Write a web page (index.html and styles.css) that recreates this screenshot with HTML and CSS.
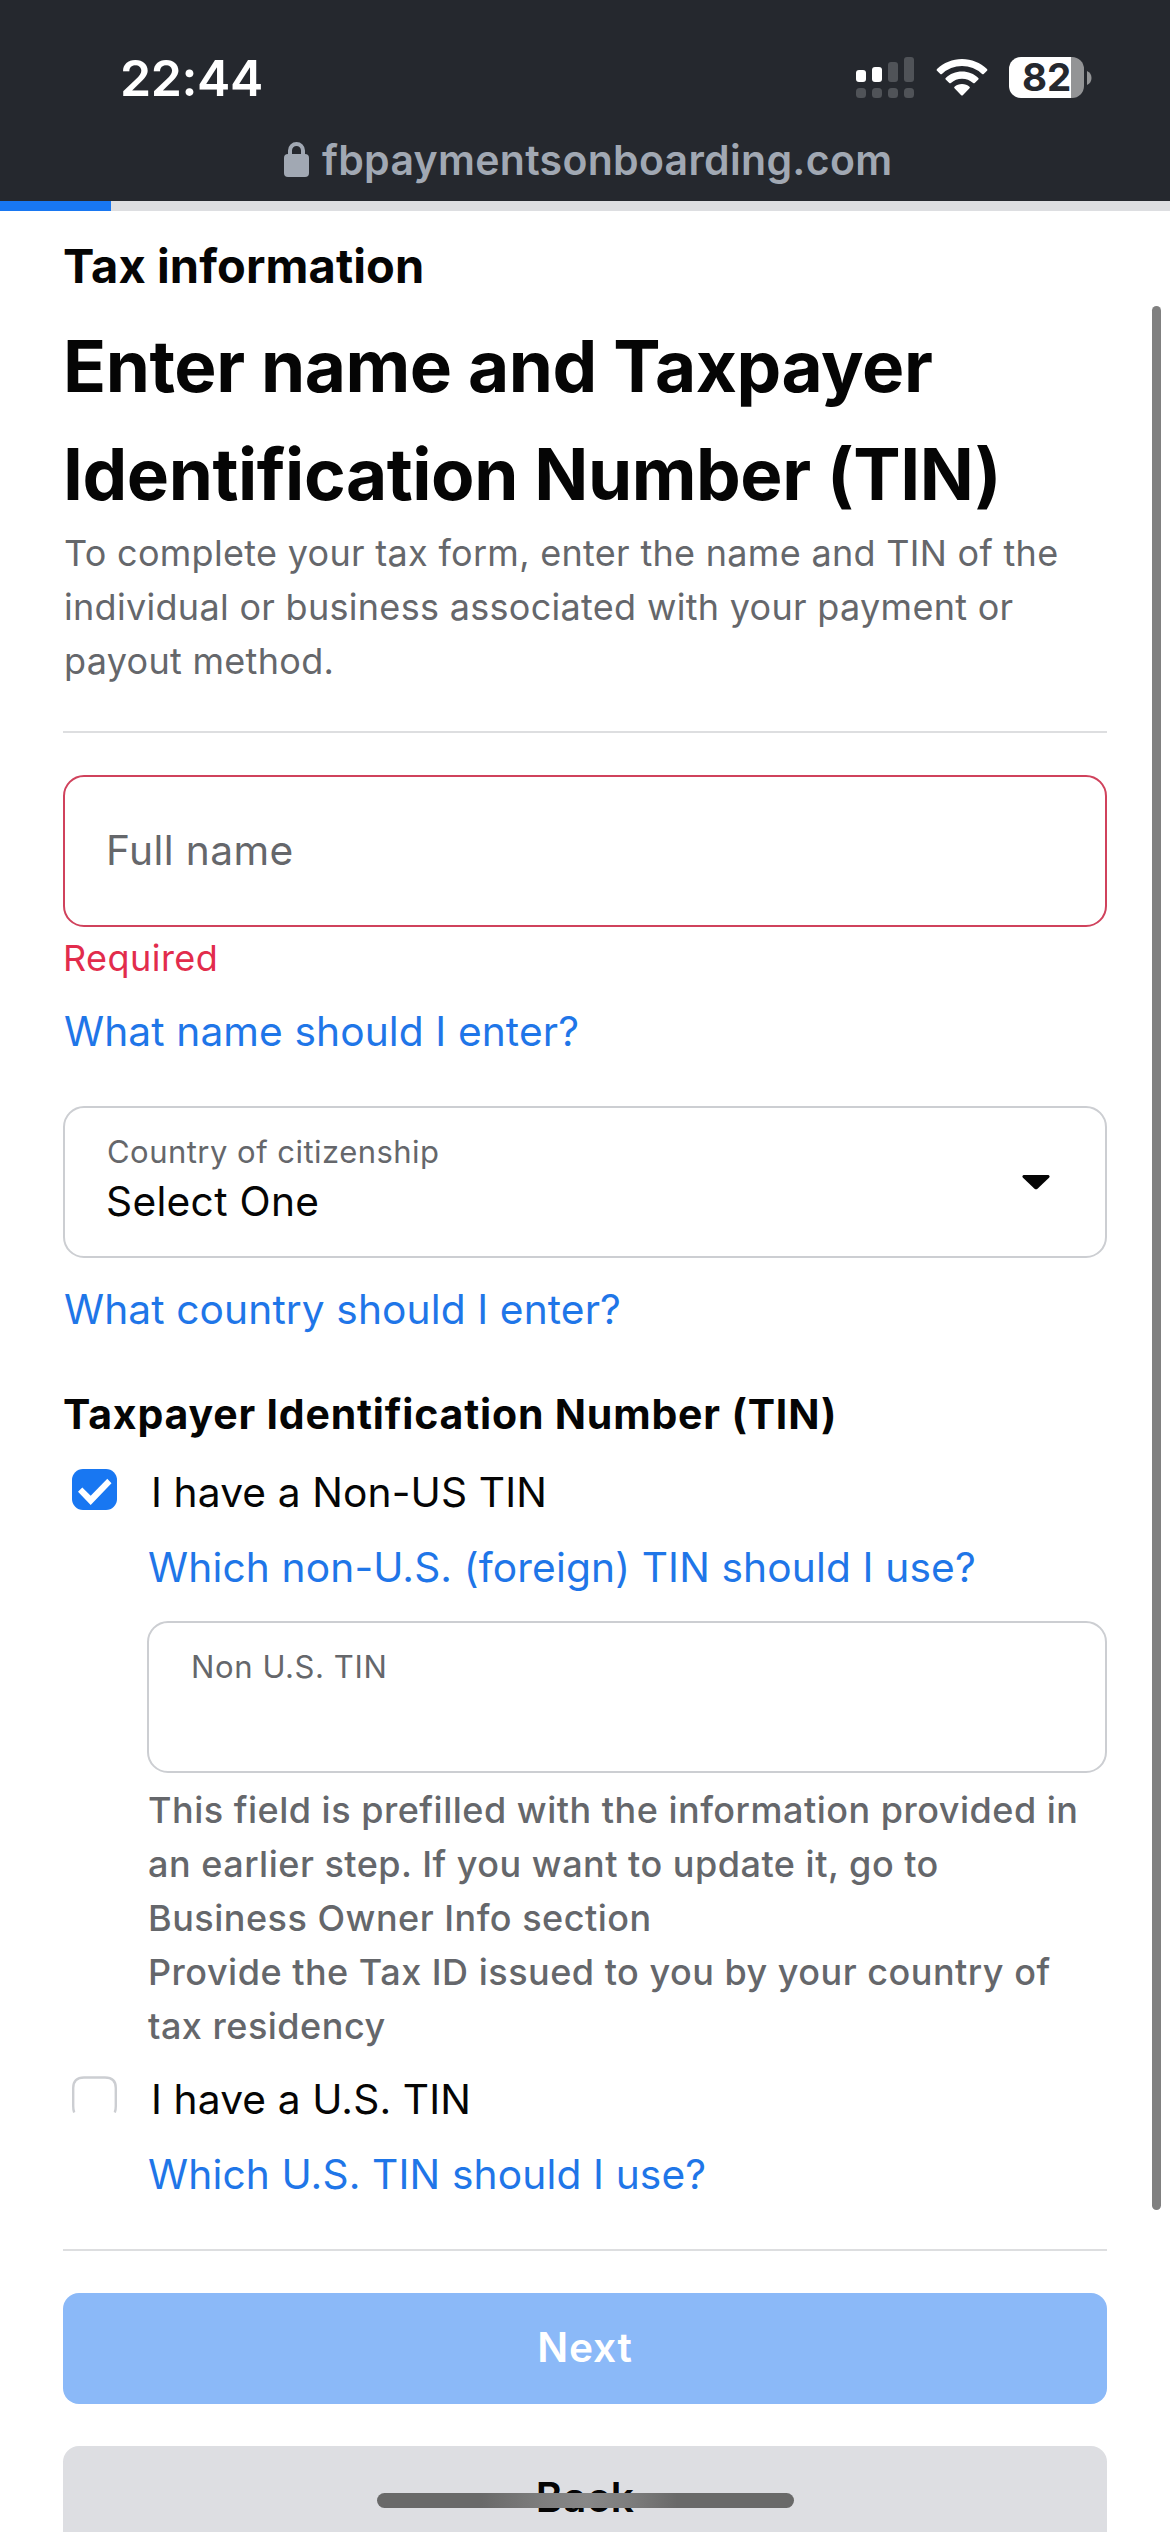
FILE: index.html
```html
<!DOCTYPE html>
<html lang="en">
<head>
<meta charset="utf-8">
<title>Tax information</title>
<link rel="stylesheet" href="styles.css">
</head>
<body>
<div class="screen">
  <header class="browser-bar">
    <div class="status">
      <span class="time">22:44</span>
      <div class="status-icons">
        <svg class="signal" width="58" height="42" viewBox="0 0 58 42" aria-hidden="true">
          <g fill="#fff"><rect x="0" y="13" width="10" height="12" rx="3"/><rect x="16" y="10" width="10" height="15" rx="3"/></g>
          <g fill="#505358"><rect x="32" y="5" width="10" height="20" rx="3"/><rect x="48" y="0" width="10" height="25" rx="3"/><rect x="0" y="31" width="10" height="10" rx="3.5"/><rect x="16" y="31" width="10" height="10" rx="3.5"/><rect x="32" y="31" width="10" height="10" rx="3.5"/><rect x="48" y="31" width="10" height="10" rx="3.5"/></g>
        </svg>
        <svg class="wifi" width="52" height="42" viewBox="0 0 52 42" fill="#fff" aria-hidden="true">
          <path d="M26 2C16.500 2 7.600 5.700 1 12.100Q.3 12.900 1 13.700L4.300 17Q5.100 17.700 5.900 17A29 29 0 0 1 46.100 17Q46.900 17.700 47.700 17L51 13.700Q51.700 12.900 51 12.100C44.400 5.700 35.500 2 26 2Z"/>
          <path d="M26 14.500C19.700 14.500 14 16.900 9.700 20.900Q8.900 21.700 9.700 22.500L13.300 26Q14.100 26.700 14.900 26A16.500 16.500 0 0 1 37.100 26Q37.900 26.700 38.700 26L42.300 22.500Q43.100 21.700 42.300 20.900C38 16.900 32.300 14.500 26 14.500Z"/>
          <path d="M26 27C23.100 27 20.500 28 18.500 29.700Q17.700 30.500 18.500 31.300L25.200 38.200Q26 38.900 26.800 38.200L33.500 31.300Q34.300 30.500 33.500 29.700C31.500 28 28.900 27 26 27Z"/>
        </svg>
        <div class="battery"><span class="battery-level">82</span></div>
        <svg class="battery-tip" width="5" height="14" viewBox="0 0 5 14" aria-hidden="true"><path d="M0 0Q4.500 2 4.500 7T0 14Z" fill="#939496"/></svg>
      </div>
    </div>
    <div class="address">
      <svg width="25" height="38" viewBox="0 0 25 38" aria-hidden="true">
        <path d="M6 14V8.500a6.500 6.500 0 0 1 13 0V14" fill="none" stroke="#a1a8b3" stroke-width="4"/>
        <rect x="0" y="12" width="25" height="23" rx="4" fill="#a1a8b3"/>
      </svg>
      <span>fbpaymentsonboarding.com</span>
    </div>
  </header>
  <div class="progress"><div class="progress-value"></div></div>

  <main class="page">
    <p class="section">Tax information</p>
    <h1>Enter name and Taxpayer<br>Identification Number (TIN)</h1>
    <p class="intro">To complete your tax form, enter the name and TIN of the<br>individual or business associated with your payment or<br>payout method.</p>
    <hr class="intro-rule">

    <div class="field field-error"><span class="placeholder">Full name</span></div>
    <p class="error">Required</p>
    <a class="link name-link">What name should I enter?</a>

    <div class="field field-select">
      <div class="field-text">
        <span class="label">Country of citizenship</span>
        <span class="value">Select One</span>
      </div>
      <svg class="caret" width="28" height="15" viewBox="0 0 28 15" aria-hidden="true"><path d="M1.500 0H26.500Q28.500 1 27 2.700L15.500 13.700Q14 15 12.500 13.700L1 2.700Q-.5 1 1.500 0Z"/></svg>
    </div>
    <a class="link country-link">What country should I enter?</a>

    <h2>Taxpayer Identification Number (TIN)</h2>
    <div class="check-row">
      <svg class="checkbox" width="45" height="41" viewBox="0 0 45 41" aria-hidden="true">
        <rect width="45" height="41" rx="11" fill="#1877f2"/>
        <path d="M6 22.700L10.300 18.500L18.700 26.700L35.300 9.700L39.500 14.300L18.700 36Z" fill="#fff"/>
      </svg>
      <span>I have a Non-US TIN</span>
    </div>
    <div class="indent">
      <a class="link tin-link">Which non-U.S. (foreign) TIN should I use?</a>
      <div class="field field-tin"><span class="label label-tin">Non U.S. TIN</span></div>
      <p class="help">This field is prefilled with the information provided in<br>an earlier step. If you want to update it, go to<br>Business Owner Info section<br>Provide the Tax ID issued to you by your country of<br>tax residency</p>
    </div>
    <div class="check-row check-row-us">
      <svg class="checkbox" width="45" height="37" viewBox="0 0 45 37" aria-hidden="true">
        <path d="M2.200 36.500Q1.200 34 1.200 30V12Q1.200 1.500 12 1.500H33Q43.800 1.500 43.800 12V30Q43.800 34 42.800 36.500" fill="none" stroke="#ccced2" stroke-width="2.400"/>
      </svg>
      <span>I have a U.S. TIN</span>
    </div>
    <div class="indent"><a class="link tin-link">Which U.S. TIN should I use?</a></div>

    <hr class="actions-rule">
    <div class="button primary">Next</div>
    <div class="button secondary">Back</div>
  </main>
  <div class="scrollbar"></div>
  <div class="home-indicator"></div>
</div>
</body>
</html>
```
FILE: styles.css
```css
* { box-sizing: border-box; }
body { margin: 0; background: #fff; }
p, h1, h2 { margin: 0; }
svg { display: block; flex: none; }

.screen {
  position: relative;
  width: 1170px;
  height: 2532px;
  overflow: hidden;
  background: #fff;
  color: #050505;
  font-family: Inter, "Liberation Sans", sans-serif;
  font-size: 40.7px;
  letter-spacing: 0.12px;
  white-space: nowrap;
}

/* Browser chrome */
.browser-bar { height: 201px; padding-top: 48px; background: #25282e; }
.status {
  display: flex;
  justify-content: space-between;
  height: 60px;
  padding: 0 78px 0 120px;
}
.time { color: #fff; font-size: 50px; font-weight: 600; line-height: 60px; letter-spacing: -0.4px; }
.status-icons { display: flex; align-items: flex-start; padding-top: 9px; }
.wifi { margin-left: 22px; }
.battery {
  width: 75px;
  height: 41px;
  margin-left: 21px;
  border-radius: 12px;
  background: linear-gradient(to right, #fff 62px, #939496 62px);
}
.battery-level {
  display: block;
  padding-left: 13px;
  color: #25282e;
  font-size: 38.5px;
  font-weight: 700;
  line-height: 41px;
  letter-spacing: 0;
}
.battery-tip { margin: 14px 0 0 3px; }
.address {
  display: flex;
  gap: 13px;
  padding: 34px 0 0 284px;
  color: #a1a8b3;
  font-size: 41px;
  font-weight: 600;
  line-height: 36px;
  letter-spacing: 0.3px;
}
.progress { height: 10px; background: #dddee1; }
.progress-value { width: 111px; height: 10px; background: #1877f2; }

/* Form */
.page { display: flex; flex-direction: column; padding: 22px 63px 0; }
.section { font-size: 47px; font-weight: 700; line-height: 66px; letter-spacing: 0.1px; }
h1 { margin-top: 13px; font-size: 71px; font-weight: 700; line-height: 108px; letter-spacing: -0.45px; }
.intro { margin-top: -2px; padding-left: 1px; color: #65676b; font-size: 36px; line-height: 54px; letter-spacing: 0.3px; }
hr { width: 100%; height: 2px; margin: 0; border: 0; background: #dddee0; }
.intro-rule { margin-top: 43px; }

.field {
  display: flex;
  height: 152px;
  padding: 0 55px 0 41px;
  border: 2px solid #ccced2;
  border-radius: 21px;
}
.field-error { align-items: center; margin-top: 42px; border-color: #d0425c; }
.placeholder { color: #65676b; line-height: 60px; letter-spacing: 0.4px; }
.error { margin-top: 4px; color: #e22c4c; font-size: 36px; line-height: 54px; letter-spacing: 0.45px; }
.link { display: block; color: #1f76e8; line-height: 60px; letter-spacing: 0.1px; }
.name-link { margin-top: 17px; padding-left: 1px; }
.field-select { margin-top: 44px; }
.field-text { display: flex; flex: 1; flex-direction: column; padding-top: 24px; }
.label { padding-left: 1px; color: #65676b; font-size: 31px; line-height: 40px; letter-spacing: 0.47px; }
.value { margin-top: 5px; line-height: 50px; letter-spacing: 0.3px; }
.caret { margin-top: 67px; fill: #050505; }
.country-link { margin-top: 22px; padding-left: 1px; }

h2 { margin-top: 44px; font-size: 41px; font-weight: 700; line-height: 60px; letter-spacing: 0.82px; }
.check-row { display: flex; gap: 34px; margin-top: 19px; padding-left: 9px; line-height: 60px; }
.checkbox { margin-top: 6px; }
.indent { padding-left: 84px; }
.tin-link { margin-top: 15px; padding-left: 1px; letter-spacing: 0.13px; }
.field-tin { margin-top: 23px; }
.label-tin { margin-top: 24px; letter-spacing: 0.6px; }
.help { margin-top: 10px; padding-left: 1px; color: #65676b; font-size: 36px; font-weight: 500; line-height: 54px; letter-spacing: 0.5px; }
.check-row-us { margin-top: 17px; }

.actions-rule { margin-top: 44px; }
.button {
  height: 111px;
  margin-top: 42px;
  border-radius: 16px;
  font-weight: 600;
  line-height: 109px;
  letter-spacing: 0.8px;
  text-align: center;
}
.primary { background: #8bb9f8; color: #fff; }
.secondary { background: #dddee2; line-height: 103px; letter-spacing: 0.4px; }

/* Overlays */
.scrollbar { position: absolute; top: 306px; left: 1152px; width: 9px; height: 1904px; border-radius: 5px; background: #808080; }
.home-indicator {
  position: absolute;
  top: 2493px;
  left: 377px;
  width: 417px;
  height: 15px;
  border-radius: 8px;
  background: linear-gradient(to right, #696969 25%, #7e7e7e 40%, #878787 50%, #7e7e7e 60%, #696969 72%);
}
```
